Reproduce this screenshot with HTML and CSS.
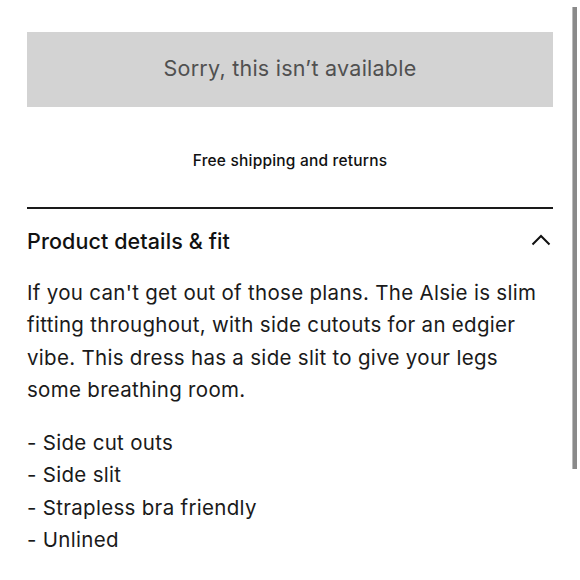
FILE: index.html
```html
<!DOCTYPE html>
<html lang="en">
<head>
<meta charset="utf-8">
<link rel="stylesheet" href="styles.css">
</head>
<body>
<main class="page">
  <button class="unavailable" type="button" disabled>Sorry, this isn’t available</button>
  <p class="shipping">Free shipping and returns</p>
  <section class="details">
    <div class="details-head">
      <h2 class="details-title">Product details &amp; fit</h2>
      <svg class="chevron" width="20" height="12" viewBox="0 0 20 12" aria-hidden="true"><path d="M1.5 10.5 L10 2 L18.5 10.5" fill="none" stroke="#111" stroke-width="2"/></svg>
    </div>
    <p class="desc">If you can't get out of those plans. The Alsie is slim fitting throughout, with side cutouts for an edgier vibe. This dress has a side slit to give your legs some breathing room.</p>
    <ul class="features">
      <li>- Side cut outs</li>
      <li>- Side slit</li>
      <li>- Strapless bra friendly</li>
      <li>- Unlined</li>
    </ul>
  </section>
</main>
<div class="scrollbar"></div>
</body>
</html>
```
FILE: styles.css
```css
html, body {
  margin: 0;
  padding: 0;
  background: #fff;
}
body {
  font-family: "Inter", "Liberation Sans", sans-serif;
  color: #1a1a1a;
  width: 580px;
  height: 580px;
  overflow: hidden;
}
.page {
  padding: 32px 27px 0 27px;
  width: 526px;
}
.unavailable {
  display: block;
  width: 100%;
  height: 75px;
  border: none;
  background: #d3d3d3;
  color: #505050;
  font-family: inherit;
  font-size: 21.5px;
  letter-spacing: 0.25px;
  margin: 0;
  padding: 0 0 3px 0;
}
.shipping {
  margin: 44px 0 0 0;
  text-align: center;
  font-size: 15.5px;
  font-weight: 500;
  line-height: 20px;
  letter-spacing: 0.2px;
  color: #111;
}
.details {
  margin-top: 36px;
  border-top: 2px solid #1a1a1a;
}
.details-head {
  display: flex;
  align-items: center;
  justify-content: space-between;
  height: 64px;
}
.details-title {
  margin: 0;
  font-size: 21.5px;
  font-weight: 500;
  letter-spacing: 0.1px;
  color: #111;
}
.chevron {
  margin-right: 2px;
  margin-top: -2px;
}
.desc {
  margin: 4px 0 0 0;
  font-size: 20.5px;
  line-height: 32.3px;
  letter-spacing: 0.3px;
  color: #1a1a1a;
}
.features {
  list-style: none;
  margin: 21px 0 0 0;
  padding: 0;
  font-size: 20.5px;
  line-height: 32.3px;
  letter-spacing: 0.3px;
}
.scrollbar {
  position: absolute;
  left: 572px;
  top: 7px;
  width: 5px;
  height: 462px;
  background: #8a8a8a;
  border-left: 1px solid #bbb;
  box-sizing: border-box;
}
```
